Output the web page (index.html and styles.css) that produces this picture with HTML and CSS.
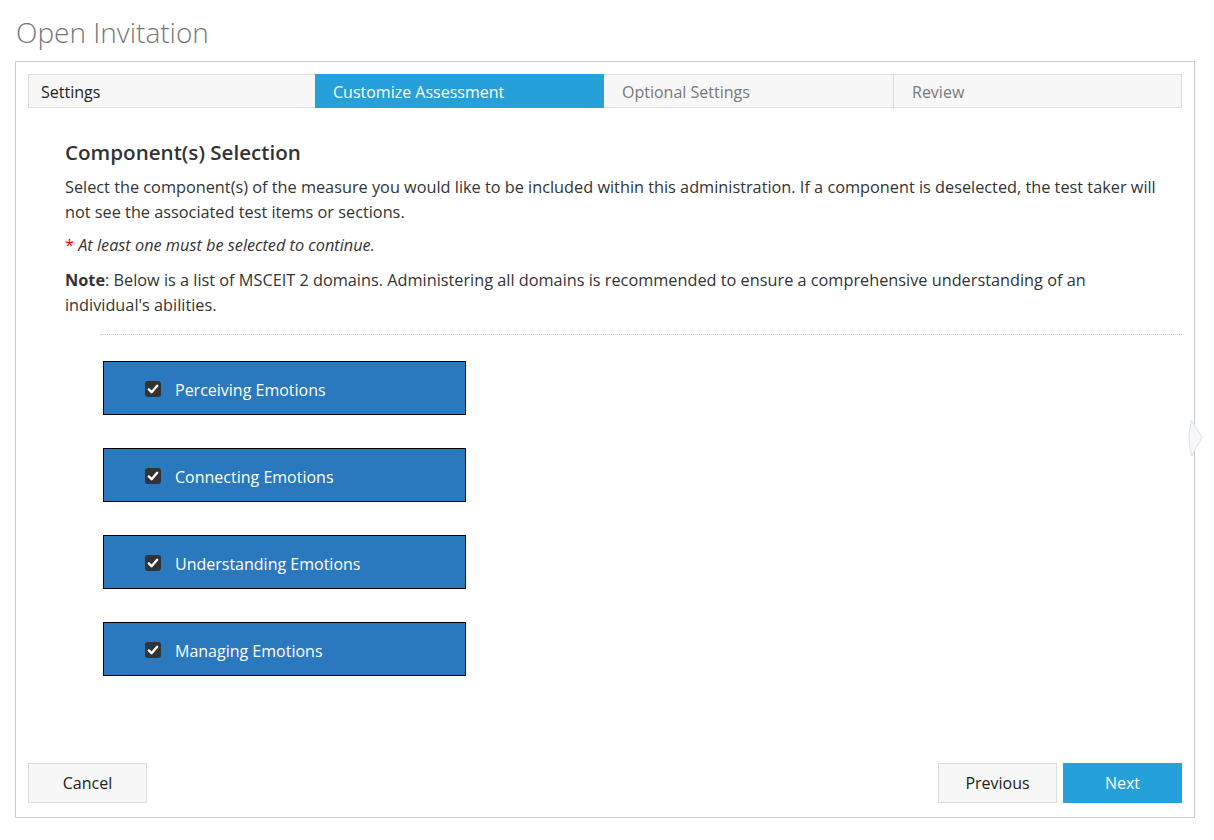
FILE: index.html
```html
<!DOCTYPE html>
<html>
<head>
<meta charset="utf-8">
<link rel="stylesheet" href="styles.css">
</head>
<body>
<h1 class="page-title">Open Invitation</h1>
<div class="panel">
  <ul class="steps">
    <li class="step done">Settings</li>
    <li class="step active">Customize Assessment</li>
    <li class="step">Optional Settings</li>
    <li class="step">Review</li>
  </ul>
  <div class="content">
    <h2 class="section-title">Component(s) Selection</h2>
    <p class="desc">Select the component(s) of the measure you would like to be included within this administration. If a component is deselected, the test taker will not see the associated test items or sections.</p>
    <p class="required"><span class="star">*</span> At least one must be selected to continue.</p>
    <p class="desc"><b>Note</b>: Below is a list of MSCEIT 2 domains. Administering all domains is recommended to ensure a comprehensive understanding of an individual's abilities.</p>
  </div>
  <div class="divider"></div>
  <div class="components">
    <label class="comp"><span class="cb"><svg viewBox="0 0 16 16" width="16" height="16"><path d="M3.8 8.4 L6.6 11.2 L12.2 4.8" fill="none" stroke="#fff" stroke-width="2.4" stroke-linecap="round" stroke-linejoin="round"/></svg></span>Perceiving Emotions</label>
    <label class="comp"><span class="cb"><svg viewBox="0 0 16 16" width="16" height="16"><path d="M3.8 8.4 L6.6 11.2 L12.2 4.8" fill="none" stroke="#fff" stroke-width="2.4" stroke-linecap="round" stroke-linejoin="round"/></svg></span>Connecting Emotions</label>
    <label class="comp"><span class="cb"><svg viewBox="0 0 16 16" width="16" height="16"><path d="M3.8 8.4 L6.6 11.2 L12.2 4.8" fill="none" stroke="#fff" stroke-width="2.4" stroke-linecap="round" stroke-linejoin="round"/></svg></span>Understanding Emotions</label>
    <label class="comp"><span class="cb"><svg viewBox="0 0 16 16" width="16" height="16"><path d="M3.8 8.4 L6.6 11.2 L12.2 4.8" fill="none" stroke="#fff" stroke-width="2.4" stroke-linecap="round" stroke-linejoin="round"/></svg></span>Managing Emotions</label>
  </div>
  <div class="footer">
    <button class="btn">Cancel</button>
    <div class="nav">
      <button class="btn">Previous</button>
      <button class="btn primary">Next</button>
    </div>
  </div>
  <svg class="side-tab" width="18" height="40" viewBox="0 0 18 40"><path d="M5.5 1 L16 18.5 L5.5 37 Q0.5 19 5.5 1 Z" fill="#f7f7f7" stroke="#cfe3f3" stroke-width="1"/></svg>
</div>
</body>
</html>
```
FILE: styles.css
```css
* { box-sizing: border-box; }
body {
  margin: 0;
  padding: 0 19px 0 15px;
  font-family: "Open Sans", "Noto Sans", sans-serif;
  color: #333;
  background: #fff;
}
.page-title {
  margin: 0;
  padding: 13px 0 0 1px;
  height: 61px;
  font-size: 28px;
  font-weight: 300;
  color: #777;
  line-height: 38px;
}
.panel {
  position: relative;
  width: 1180px;
  height: 757px;
  border: 1px solid #ccc;
  padding: 12px 12px 14px 12px;
  display: flex;
  flex-direction: column;
}
.steps {
  list-style: none;
  margin: 0;
  padding: 0;
  display: grid;
  grid-template-columns: 286px 289px 289px 1fr;
  border: 1px solid #ddd;
  background: #f7f7f7;
  height: 34px;
}
.step {
  font-size: 16px;
  line-height: 34px;
  padding-left: 18px;
  color: #777;
  border-left: 1px solid #ddd;
}
.step:first-child { border-left: none; padding-left: 12px; }
.step.done { color: #222; }
.step.active {
  background: #26a0da;
  color: #fff;
  border-left: none;
  margin-top: -1px;
  height: 34px;
  line-height: 36px;
}
.step.active + .step { border-left: none; }
.content {
  padding: 0 17px 0 37px;
}
.section-title {
  margin: 31px 0 10px;
  font-size: 20.6px;
  font-weight: 600;
  line-height: 26px;
  color: #333;
}
.desc {
  margin: 0 0 8px;
  font-size: 16.3px;
  line-height: 25px;
}
.desc b { font-weight: 700; }
.required {
  margin: 0 0 10px;
  font-size: 16.3px;
  line-height: 25px;
  font-style: italic;
}
.star { color: #e00; font-style: normal; }
.divider {
  margin: 8px 0 0 72px;
  border-top: 1px dotted #ccc;
}
.components {
  display: flex;
  flex-direction: column;
  gap: 33px;
  padding: 26px 0 0 75px;
}
.comp {
  display: flex;
  align-items: center;
  width: 363px;
  height: 54px;
  border: 1px solid #000;
  background: #2a78bd;
  color: #fff;
  font-size: 16px;
  padding: 4px 0 0 41px;
}
.cb {
  width: 16px;
  height: 16px;
  border-radius: 3px;
  background: #333;
  margin-right: 14px;
  margin-top: -3px;
  display: block;
}
.cb svg { display: block; }
.footer {
  margin-top: auto;
  display: flex;
  justify-content: space-between;
}
.nav { display: flex; gap: 6px; }
.btn {
  height: 40px;
  width: 119px;
  font-family: "Open Sans", "Noto Sans", sans-serif;
  font-size: 16px;
  background: #f7f7f7;
  border: 1px solid #ddd;
  color: #222;
  padding: 0;
}
.btn.primary {
  background: #26a0da;
  border-color: #26a0da;
  color: #fff;
}
.side-tab {
  position: absolute;
  right: -10px;
  top: 357px;
}
```
